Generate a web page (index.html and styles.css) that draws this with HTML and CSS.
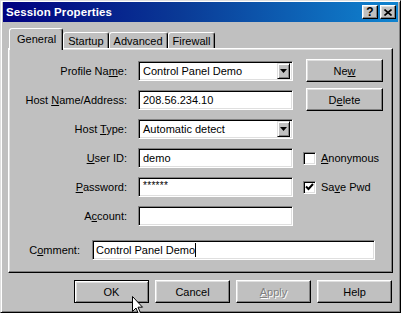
FILE: index.html
```html
<!DOCTYPE html>
<html>
<head>
<meta charset="utf-8">
<link rel="stylesheet" href="styles.css">
</head>
<body>
<div class="window">
  <div class="titlebar">
    <span class="title">Session Properties</span>
    <div class="caption-btns">
      <div class="cap-btn help">?</div>
      <div class="cap-btn close"><svg width="8" height="7" viewBox="0 0 8 7"><path d="M0.5 0.5 L7.5 6.5 M7.5 0.5 L0.5 6.5" stroke="#000" stroke-width="1.6"/></svg></div>
    </div>
  </div>
  <div class="body">
    <div class="tabs">
      <div class="tab active">General</div>
      <div class="tab">Startup</div>
      <div class="tab">Advanced</div>
      <div class="tab">Firewall</div>
    </div>
    <div class="panel">
      <div class="form">
        <div class="lbl"><span>Profile Na<u>m</u>e:</span></div>
        <div class="field select"><span class="val">Control Panel Demo</span><span class="dd"><svg width="7" height="4" viewBox="0 0 7 4"><path d="M0 0 H7 L3.5 4 Z" fill="#000"/></svg></span></div>
        <div class="extra"><div class="btn side"><span>Ne<u>w</u></span></div></div>

        <div class="lbl"><span>Host <u>N</u>ame/Address:</span></div>
        <div class="field"><span class="val">208.56.234.10</span></div>
        <div class="extra"><div class="btn side"><span>D<u>e</u>lete</span></div></div>

        <div class="lbl"><span>Host <u>T</u>ype:</span></div>
        <div class="field select"><span class="val">Automatic detect</span><span class="dd"><svg width="7" height="4" viewBox="0 0 7 4"><path d="M0 0 H7 L3.5 4 Z" fill="#000"/></svg></span></div>
        <div class="extra"></div>

        <div class="lbl"><span><u>U</u>ser ID:</span></div>
        <div class="field"><span class="val">demo</span></div>
        <div class="extra check-row"><span class="check"></span><span><u>A</u>nonymous</span></div>

        <div class="lbl"><span><u>P</u>assword:</span></div>
        <div class="field"><span class="val pw">******</span></div>
        <div class="extra check-row"><span class="check"><svg width="9" height="8" viewBox="0 0 9 8"><path d="M1 3.5 L3.5 6 L8 1" fill="none" stroke="#000" stroke-width="2"/></svg></span><span>Sa<u>v</u>e Pwd</span></div>

        <div class="lbl"><span>A<u>c</u>count:</span></div>
        <div class="field"></div>
        <div class="extra"></div>
      </div>
      <div class="comment-row">
        <div class="lbl comment-lbl"><span>C<u>o</u>mment:</span></div>
        <div class="field comment"><span class="val">Control Panel Demo</span><span class="caret"></span></div>
      </div>
    </div>
    <div class="actions">
      <div class="btn act default">OK</div>
      <div class="btn act">Cancel</div>
      <div class="btn act disabled"><span><u>A</u>pply</span></div>
      <div class="btn act">Help</div>
    </div>
  </div>
  <svg class="cursor" width="12" height="19" viewBox="0 0 12 19"><path d="M0.5 0.5 L0.5 15.5 L4 12 L6.5 18 L8.5 17 L6 11.2 L10.5 11.2 Z" fill="#fff" stroke="#000" stroke-width="1"/></svg>
</div>
</body>
</html>
```
FILE: styles.css
```css
* { box-sizing: border-box; }
html, body { margin: 0; padding: 0; }
body {
  width: 401px;
  height: 313px;
  overflow: hidden;
  background: #c0c0c0;
  font-family: "Liberation Sans", Arial, sans-serif;
  font-size: 11px;
  color: #000;
}
u { text-decoration: underline; text-underline-offset: 1px; }

.window {
  position: relative;
  width: 401px;
  height: 313px;
  background: #c0c0c0;
  border: 1px solid;
  border-color: #dfdfdf #000 #000 #dfdfdf;
  box-shadow: inset 1px 1px #fff, inset -1px -1px #808080;
  padding: 1px 2px 2px 2px;
  display: flex;
  flex-direction: column;
}

.titlebar {
  height: 20px;
  background: linear-gradient(to right, #000080 0%, #0a3a96 45%, #1084d0 100%);
  display: flex;
  align-items: center;
  justify-content: space-between;
  padding: 0 2px 0 3px;
}
.title {
  color: #fff;
  font-weight: bold;
  font-size: 11.5px;
  letter-spacing: 0.1px;
}
.caption-btns { display: flex; gap: 2px; }
.cap-btn {
  width: 16px;
  height: 14px;
  background: #c0c0c0;
  border: 1px solid;
  border-color: #fff #000 #000 #fff;
  box-shadow: inset -1px -1px #808080, inset 1px 1px #dfdfdf;
  display: flex;
  align-items: center;
  justify-content: center;
  font-weight: bold;
  font-size: 12px;
  line-height: 1;
}

.body {
  flex: 1;
  padding: 6px 5px 0 5px;
  display: flex;
  flex-direction: column;
}

.tabs {
  display: flex;
  align-items: flex-end;
  height: 20px;
  padding-left: 1px;
}
.tab {
  position: relative;
  height: 16px;
  padding: 1px 4px 0 4px;
  border: 1px solid;
  border-bottom: none;
  border-color: #fff #000 transparent #fff;
  box-shadow: inset -1px 0 #808080;
  border-radius: 3px 3px 0 0;
  display: flex;
  align-items: center;
  background: #c0c0c0;
}
.tab.active {
  height: 22px;
  margin-bottom: -2px;
  padding: 0 6px 2px 7px;
  z-index: 1;
}

.panel {
  width: 385px;
  height: 225px;
  border: 1px solid;
  border-color: #fff #000 #000 #fff;
  box-shadow: inset -1px -1px #808080, inset 1px 1px #dfdfdf;
  padding: 12px 1px 11px 1px;
}

.form {
  display: grid;
  grid-template-columns: 128px 155px 1fr;
  grid-auto-rows: 20px;
  row-gap: 9px;
}
.lbl {
  padding-right: 11px;
  display: flex;
  align-items: center;
  justify-content: flex-end;
  white-space: nowrap;
}

.field {
  height: 20px;
  background: #fff;
  border: 1px solid;
  border-color: #808080 #fff #fff #808080;
  box-shadow: inset 1px 1px #000, inset -1px -1px #dfdfdf;
  display: flex;
  align-items: center;
  padding: 0 2px 0 4px;
  position: relative;
}
.val { white-space: nowrap; }
.pw { font-size: 10px; align-self: flex-start; padding-top: 2px; letter-spacing: 0.3px; }
.select { padding-right: 2px; }
.select .val { flex: 1; }
.dd {
  width: 13px;
  height: 16px;
  background: #c0c0c0;
  border: 1px solid;
  border-color: #dfdfdf #000 #000 #dfdfdf;
  box-shadow: inset 1px 1px #fff, inset -1px -1px #808080;
  display: flex;
  align-items: center;
  justify-content: center;
}

.extra { display: flex; align-items: center; }
.check-row { padding-left: 10px; gap: 5px; }
.check {
  width: 13px;
  height: 13px;
  background: #fff;
  border: 1px solid;
  border-color: #808080 #fff #fff #808080;
  box-shadow: inset 1px 1px #000, inset -1px -1px #dfdfdf;
  display: flex;
  align-items: center;
  justify-content: center;
}

.btn {
  background: #c0c0c0;
  border: 1px solid;
  border-color: #fff #000 #000 #fff;
  box-shadow: inset -1px -1px #808080, inset 1px 1px #dfdfdf;
  display: flex;
  align-items: center;
  justify-content: center;
}
.side {
  width: 77px;
  height: 23px;
  margin-left: 13px;
  margin-top: -2px;
  align-self: flex-start;
}

.comment-row {
  display: flex;
  margin-top: 14px;
  height: 20px;
}
.comment-lbl {
  width: 70px;
  padding-right: 0;
  margin-right: 12px;
}
.comment { width: 283px; padding-left: 3px; }
.caret {
  width: 1px;
  height: 14px;
  background: #000;
}

.actions {
  display: flex;
  justify-content: flex-end;
  gap: 6px;
  margin-top: 7px;
  padding-right: 1px;
}
.act { width: 75px; height: 23px; }
.default {
  border-color: #000;
  box-shadow: inset 1px 1px #fff, inset -1px -1px #808080, inset 2px 2px #dfdfdf;
}
.disabled {
  color: #808080;
  text-shadow: 1px 1px #fff;
}
.disabled u { text-decoration-color: #808080; }

.cursor {
  position: absolute;
  left: 131px;
  top: 295px;
}
```
